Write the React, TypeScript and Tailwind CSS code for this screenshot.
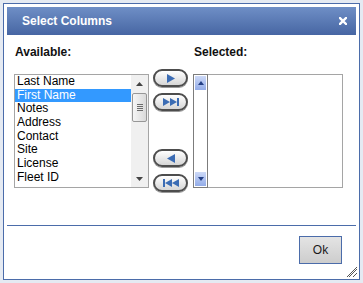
import React from 'react'

const items = ['Last Name', 'First Name', 'Notes', 'Address', 'Contact', 'Site', 'License', 'Fleet ID']

const ArrowButton = ({ children, className = '' }: { children: React.ReactNode; className?: string }) => (
  <button className={`flex h-[18px] w-[35px] items-center justify-center rounded-full border-2 border-[#4d4d4d] bg-linear-to-b from-white to-[#d6d6d6] shadow-[0_1px_0_#9a9a9a] ${className}`}>
    {children}
  </button>
)

const BLUE = '#3b6cb4'

export default function App() {
  return (
    <div className="h-[283px] w-[363px] bg-[#e5eaf2] p-[3px] font-['Liberation_Sans',Arial,sans-serif]">
      <div className="relative flex h-full flex-col border border-[#4b6caa] bg-white p-[3px]">
        {/* Title bar */}
        <div className="flex h-[28px] shrink-0 items-center justify-between bg-linear-to-b from-[#6f8fc6] to-[#4766a3] pl-[15px] pr-[9px]">
          <span className="text-[12px] font-bold text-white">Select Columns</span>
          <svg width="8" height="8" viewBox="0 0 8 8">
            <path d="M1 1L7 7M7 1L1 7" stroke="white" strokeWidth="2.4" strokeLinecap="square" />
          </svg>
        </div>

        {/* Labels */}
        <div className="mt-[10px] flex h-[14px] text-[12px] font-bold leading-[14px] text-[#111]">
          <span className="ml-[8px] w-[179px]">Available:</span>
          <span>Selected:</span>
        </div>

        {/* Lists */}
        <div className="mt-[10px] flex items-start pl-[7px]">
          {/* Available list */}
          <div className="mt-[5px] flex h-[114px] w-[135px] border border-[#a5a5a5]">
            <div className="flex-1 overflow-hidden text-[12px] text-black">
              {items.map((it, i) => (
                <div
                  key={it}
                  className={`h-[13.7px] whitespace-nowrap pl-[2px] leading-[13.7px] ${i === 1 ? 'bg-[#3399ff] text-white' : ''}`}
                >
                  {it}
                </div>
              ))}
            </div>
            <div className="flex w-[17px] flex-col bg-[#f0f0f0]">
              <div className="flex h-[17px] items-center justify-center">
                <svg width="7" height="4" viewBox="0 0 7 4"><path d="M0 4L3.5 0L7 4Z" fill="#444" /></svg>
              </div>
              <div className="mx-[1px] mt-[1px] flex h-[29px] flex-col items-center justify-center gap-[1px] rounded-[2px] border border-[#979797] bg-linear-to-r from-[#f6f6f6] to-[#dadada]">
                <div className="h-px w-[6px] bg-[#6c6c6c]" />
                <div className="h-px w-[6px] bg-[#6c6c6c]" />
                <div className="h-px w-[6px] bg-[#6c6c6c]" />
                <div className="h-px w-[6px] bg-[#6c6c6c]" />
              </div>
              <div className="flex-1" />
              <div className="flex h-[17px] items-center justify-center">
                <svg width="7" height="4" viewBox="0 0 7 4"><path d="M0 0L3.5 4L7 0Z" fill="#444" /></svg>
              </div>
            </div>
          </div>

          {/* Move buttons */}
          <div className="ml-[4px] flex w-[35px] flex-col">
            <ArrowButton>
              <svg width="8" height="9" viewBox="0 0 8 9"><path d="M0 0L8 4.5L0 9Z" fill={BLUE} /></svg>
            </ArrowButton>
            <ArrowButton className="mt-[6px]">
              <svg width="16" height="8" viewBox="0 0 16 8">
                <path d="M0 0L7 4L0 8ZM7 0L14 4L7 8Z" fill={BLUE} />
                <rect x="14" y="0" width="2" height="8" fill={BLUE} />
              </svg>
            </ArrowButton>
            <ArrowButton className="mt-[38px]">
              <svg width="8" height="9" viewBox="0 0 8 9"><path d="M8 0L0 4.5L8 9Z" fill={BLUE} /></svg>
            </ArrowButton>
            <ArrowButton className="mt-[7px]">
              <svg width="16" height="8" viewBox="0 0 16 8">
                <rect x="0" y="0" width="2" height="8" fill={BLUE} />
                <path d="M9 0L2 4L9 8ZM16 0L9 4L16 8Z" fill={BLUE} />
              </svg>
            </ArrowButton>
          </div>

          {/* Selected list */}
          <div className="ml-[5px] mt-[5px] flex">
            <div className="flex h-[114px] w-[15px] flex-col justify-between border border-[#7c7c7c] bg-white p-[1px]">
              <div className="flex h-[14px] items-center justify-center bg-linear-to-b from-[#cdd9f7] to-[#93ace8]">
                <svg width="6" height="4" viewBox="0 0 6 4"><path d="M0 4L3 0L6 4Z" fill="#233f85" /></svg>
              </div>
              <div className="flex h-[14px] items-center justify-center bg-linear-to-b from-[#cdd9f7] to-[#93ace8]">
                <svg width="6" height="4" viewBox="0 0 6 4"><path d="M0 0L3 4L6 0Z" fill="#233f85" /></svg>
              </div>
            </div>
            <div className="h-[114px] w-[135px] border border-l-0 border-[#a5a5a5] bg-white" />
          </div>
        </div>

        {/* Separator */}
        <div className="mt-[33px] h-px bg-[#4b6caa]" />

        {/* Footer */}
        <button className="mr-[14px] mt-[10px] flex h-[28px] w-[43px] items-center justify-center self-end border border-[#4b6caa] bg-linear-to-b from-[#e4e4e4] to-[#cdcdcd] text-[12px] text-[#1a1a1a]">
          Ok
        </button>

        {/* Resize grip */}
        <svg className="absolute bottom-[1px] right-[1px]" width="12" height="12" viewBox="0 0 12 12">
          <path d="M11 3L3 11M11 7L7 11M11 11L11 11" stroke="#555" strokeWidth="1" />
          <path d="M11 1L1 11" stroke="#555" strokeWidth="1" />
        </svg>
      </div>
    </div>
  )
}
